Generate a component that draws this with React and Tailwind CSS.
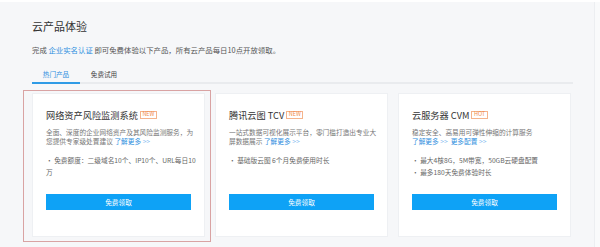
import React from "react";

const font = { fontFamily: '"Noto Sans CJK SC", "Noto Sans", sans-serif' };

function Badge({ text }) {
  return (
    <span className="ml-[2px] inline-flex h-[8px] items-center border border-[#f5b48c] px-[1.5px] text-[5.5px] leading-none text-[#f08a4b]">
      {text}
    </span>
  );
}

function Card({ title, badge, desc, bullets }) {
  return (
    <div className="flex h-[144px] w-[173px] flex-col border border-[#eef0f3] bg-white px-[13px] pb-[26px] pt-[15px]">
      <div className="flex items-center text-[9.2px] leading-[12px] text-[#333]">
        <span>{title}</span>
        <Badge text={badge} />
      </div>
      <div className="mt-[7px] whitespace-nowrap text-[6.7px] leading-[9px] text-[#777]">{desc}</div>
      <div className="mt-[9px] whitespace-nowrap text-[6.7px] leading-[11.5px] text-[#666]">{bullets}</div>
      <button className="mt-auto h-[16px] w-full bg-[#0ea2f6] text-[6.7px] leading-none text-white">免费领取</button>
    </div>
  );
}

const Link = ({ children }) => (
  <span className="text-[#2f8fe0]">
    {children} <span className="text-[#7fbaf0]">&gt;&gt;</span>
  </span>
);

export default function App() {
  return (
    <div className="relative h-[247px] w-[600px] overflow-hidden bg-[#f6f7f9]" style={font}>
      <div className="h-[2px] bg-white" />
      <div className="flex">
        <div className="flex-1 pl-[32px] pr-[20px]">
          <div className="pt-[17px] text-[11px] leading-[14px] text-[#333]">云产品体验</div>
          <div className="mt-[12px] text-[7.4px] leading-[10px] text-[#555]">
            完成 <span className="text-[#2f8fe0]">企业实名认证</span> 即可免费体验以下产品，所有云产品每日10点开放领取。
          </div>
          <div className="mt-[14px] flex w-[541px] border-b-2 border-[#e9ebee]">
            <div className="-mb-[2px] w-[48px] border-b-2 border-[#2f9be6] pb-[3px] text-center text-[6.6px] leading-[10px] text-[#2f8fe0]">
              热门产品
            </div>
            <div className="w-[48px] pb-[3px] text-center text-[6.6px] leading-[10px] text-[#444]">免费试用</div>
          </div>
          <div className="mt-[9px] flex gap-[10px]">
            <Card
              title="网络资产风险监测系统"
              badge="NEW"
              desc={
                <>
                  全面、深度的企业网络资产及其风险监测服务，为
                  <br />
                  您提供专家级处置建议 <Link>了解更多</Link>
                </>
              }
              bullets={
                <>
                  • 免费额度：二级域名10个、IP10个、URL每日10
                  <br />万
                </>
              }
            />
            <Card
              title="腾讯云图 TCV"
              badge="NEW"
              desc={
                <>
                  一站式数据可视化展示平台，零门槛打造出专业大
                  <br />
                  屏数据展示 <Link>了解更多</Link>
                </>
              }
              bullets={<>• 基础版云图 6个月免费使用时长</>}
            />
            <Card
              title="云服务器 CVM"
              badge="HOT"
              desc={
                <>
                  稳定安全、高易用可弹性伸缩的计算服务
                  <br />
                  <Link>了解更多</Link>&nbsp;&nbsp;<Link>更多配置</Link>
                </>
              }
              bullets={
                <>
                  • 最大4核8G，5M带宽，50GB云硬盘配置
                  <br />• 最多180天免费体验时长
                </>
              }
            />
          </div>
        </div>
        <div className="h-[245px] w-[6px] border-l border-[#eceef1] bg-[#f9fafb]" />
      </div>
      <div className="pointer-events-none absolute left-[23px] top-[90px] h-[152px] w-[188px] border border-[#d9a3a3]" />
    </div>
  );
}
